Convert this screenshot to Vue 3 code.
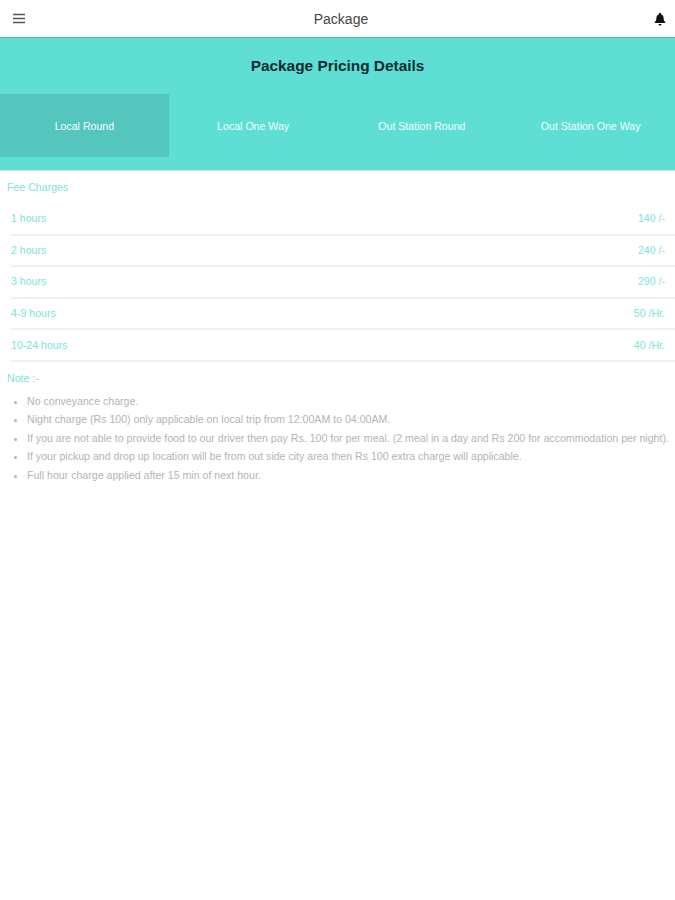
<script setup>
const tabs = ['Local Round', 'Local One Way', 'Out Station Round', 'Out Station One Way']

const fees = [
  { label: '1 hours', price: '140 /-' },
  { label: '2 hours', price: '240 /-' },
  { label: '3 hours', price: '290 /-' },
  { label: '4-9 hours', price: '50 /Hr.' },
  { label: '10-24 hours', price: '40 /Hr.' }
]

const notes = [
  'No conveyance charge.',
  'Night charge (Rs 100) only applicable on local trip from 12:00AM to 04:00AM.',
  'If you are not able to provide food to our driver then pay Rs. 100 for per meal. (2 meal in a day and Rs 200 for accommodation per night).',
  'If your pickup and drop up location will be from out side city area then Rs 100 extra charge will applicable.',
  'Full hour charge applied after 15 min of next hour.'
]
</script>

<template>
  <div class="page">
    <header class="topbar">
      <svg class="menu" width="14" height="12" viewBox="0 0 14 12">
        <path d="M1 1.500h12M1 5.500h12M1 9.500h12" stroke="#555" stroke-width="1.600" fill="none" />
      </svg>
      <span class="title">Package</span>
      <svg class="bell" width="12" height="14" viewBox="0 0 12 14">
        <path d="M6 0.800c.6 0 1 .4 1 1v.5c1.700.5 2.600 2 2.600 3.800 0 2 .5 3 1.600 4v1H.8v-1c1.100-1 1.600-2 1.600-4 0-1.800.9-3.300 2.600-3.800v-.5c0-.6.400-1 1-1zM4.500 12h3c0 .9-.6 1.500-1.500 1.500S4.500 12.900 4.500 12z" fill="#111" />
      </svg>
    </header>

    <section class="hero">
      <h1>Package Pricing Details</h1>
      <div class="tabs">
        <div v-for="(tab, i) in tabs" :key="tab" class="tab" :class="{ active: i === 0 }">{{ tab }}</div>
      </div>
    </section>

    <h2 class="label">Fee Charges</h2>
    <ul class="fees">
      <li v-for="fee in fees" :key="fee.label">
        <span>{{ fee.label }}</span>
        <span class="price">{{ fee.price }}</span>
      </li>
    </ul>

    <h2 class="label note-label">Note :-</h2>
    <ul class="notes">
      <li v-for="note in notes" :key="note">{{ note }}</li>
    </ul>
  </div>
</template>

<style>
html, body {
  background: #fff;
}
</style>

<style scoped>
.page {
  min-height: 900px;
  background: #fff;
  font-family: "Liberation Sans", Arial, sans-serif;
}

.topbar {
  height: 38px;
  display: flex;
  align-items: center;
  justify-content: space-between;
  padding: 0 9px 0 12px;
  border-bottom: 1px solid #4fb5ab;
  box-sizing: border-box;
}

.title {
  font-size: 14px;
  color: #444;
  margin-left: 2px;
}

.hero {
  height: 133px;
  background: #5fded4;
  border-bottom: 1px solid #c5f3ef;
  box-sizing: border-box;
  padding-top: 18px;
}

.hero h1 {
  margin: 0;
  height: 38px;
  font-size: 15.400px;
  line-height: 20px;
  font-weight: bold;
  text-align: center;
  color: #0c2b30;
}

.tabs {
  display: grid;
  grid-template-columns: repeat(4, 1fr);
  height: 63px;
}

.tab {
  display: flex;
  align-items: center;
  justify-content: center;
  padding-top: 1px;
  font-size: 10.600px;
  color: #f2fffd;
}

.tab.active {
  background: #55c6bd;
}

.label {
  margin: 0;
  padding: 10px 0 0 7px;
  font-size: 10.600px;
  line-height: 13px;
  font-weight: normal;
  color: #7de4db;
}

.fees {
  list-style: none;
  margin: 10px 0 0;
  padding: 0 0 0 11px;
}

.fees li {
  height: 31.600px;
  display: flex;
  align-items: center;
  justify-content: space-between;
  padding: 0 10px 1px 0;
  font-size: 10.600px;
  color: #7de4db;
  border-bottom: 2px solid #f0f0f0;
  box-sizing: border-box;
}

.note-label {
  padding-top: 10px;
}

.notes {
  margin: 7px 0 0;
  padding: 0 0 0 27px;
  font-size: 10.600px;
  line-height: 18.400px;
  color: #b4b4b4;
}
</style>
